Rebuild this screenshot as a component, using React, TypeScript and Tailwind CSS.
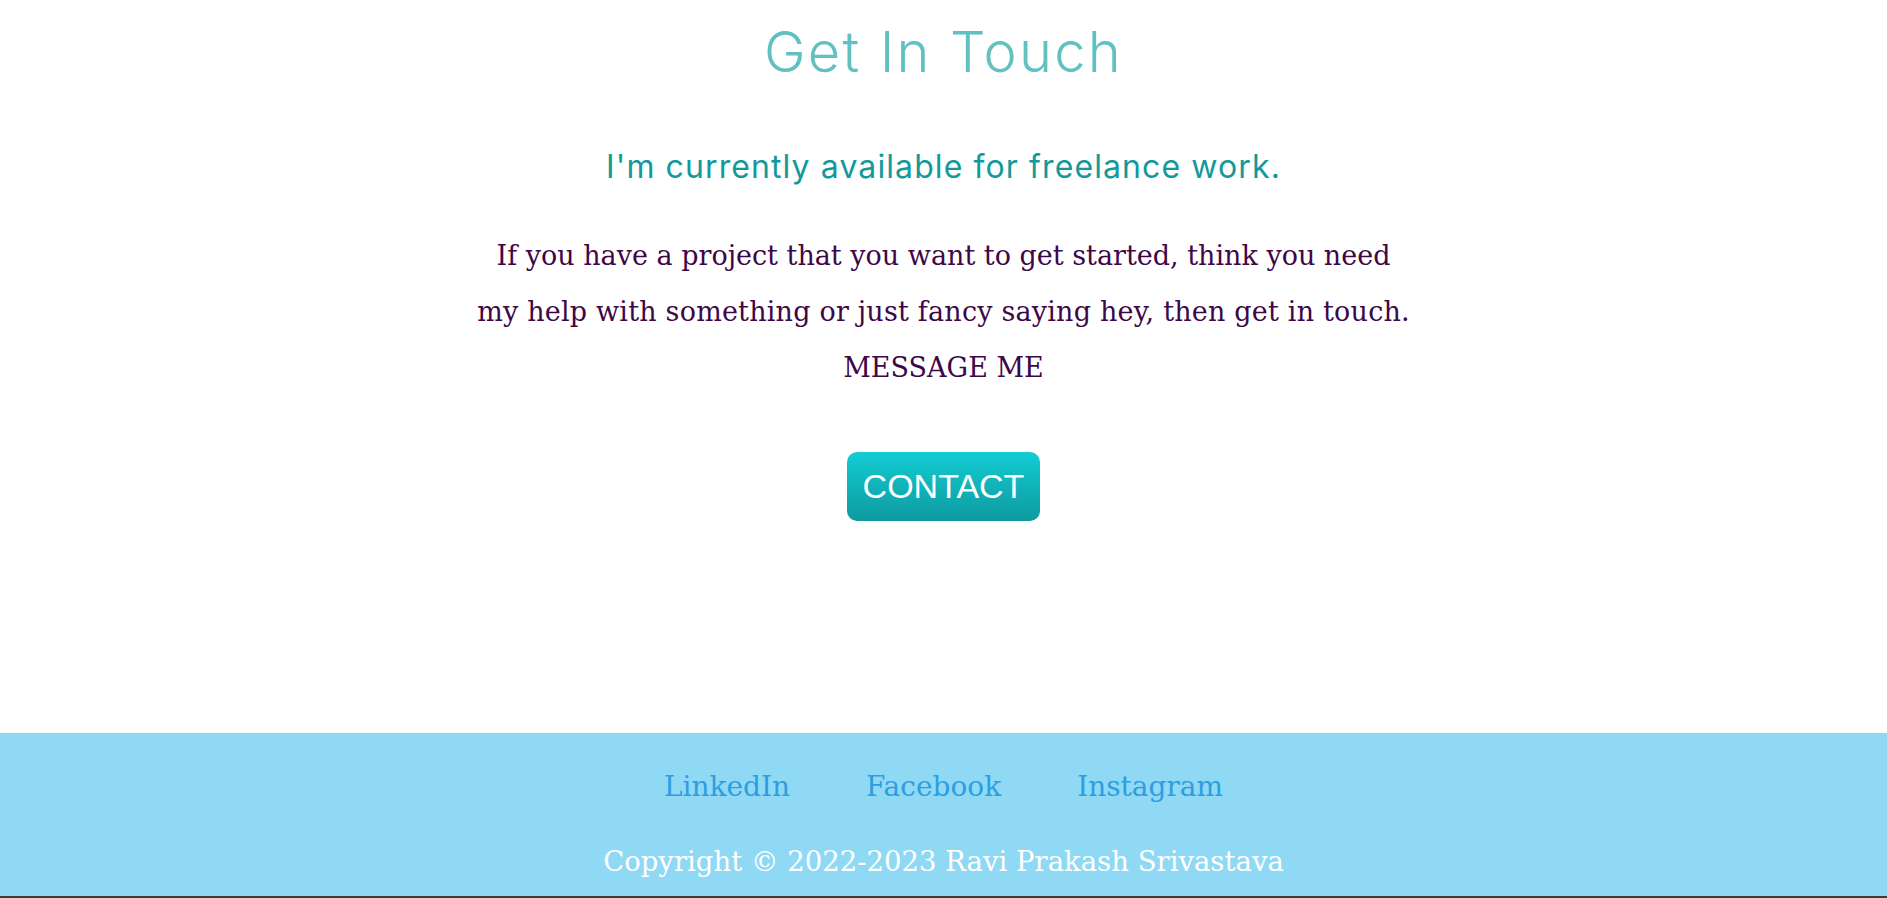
export default function App() {
  return (
    <div className="flex min-h-screen flex-col bg-white">
      <section className="flex flex-col items-center pt-[18px] text-center">
        <h1 className="font-['Inter',sans-serif] text-[56px] leading-[68px] font-light tracking-[2.3px] text-[#62c0c0]">
          Get In Touch
        </h1>
        <h2 className="mt-[61px] font-['Inter',sans-serif] text-[32px] leading-[40px] font-normal tracking-[1.1px] text-[#13999b]">
          I'm currently available for freelance work.
        </h2>
        <div className="mt-[41px] font-['DejaVu_Serif',serif] text-[27px] leading-[56px] text-[#3d0748]">
          <p>
            If you have a project that you want to get started, think you need
            <br />
            <span className="tracking-[0.2px]">
              my help with something or just fancy saying hey, then get in touch.
            </span>
          </p>
          <p>MESSAGE ME</p>
        </div>
        <button className="mt-[56px] rounded-[10px] bg-gradient-to-b from-[#12cdd3] to-[#0e9a9f] px-4 py-4 font-['Liberation_Sans',sans-serif] text-[34px] leading-[37px] text-white">
          CONTACT
        </button>
      </section>

      <footer className="mt-[212px] bg-[#8fd9f5] pt-[34px] pb-[15px] text-center font-['DejaVu_Serif',serif] leading-[40px]">
        <div className="flex justify-center gap-[76px] text-[28px] text-[#2d9ee0]">
          <a href="#">LinkedIn</a>
          <a href="#">Facebook</a>
          <a href="#">Instagram</a>
        </div>
        <p className="mt-[34px] text-[27.5px] text-white">
          Copyright © 2022-2023 Ravi Prakash Srivastava
        </p>
      </footer>
      <div className="h-[2px] bg-[#3c3c3c]" />
    </div>
  );
}
